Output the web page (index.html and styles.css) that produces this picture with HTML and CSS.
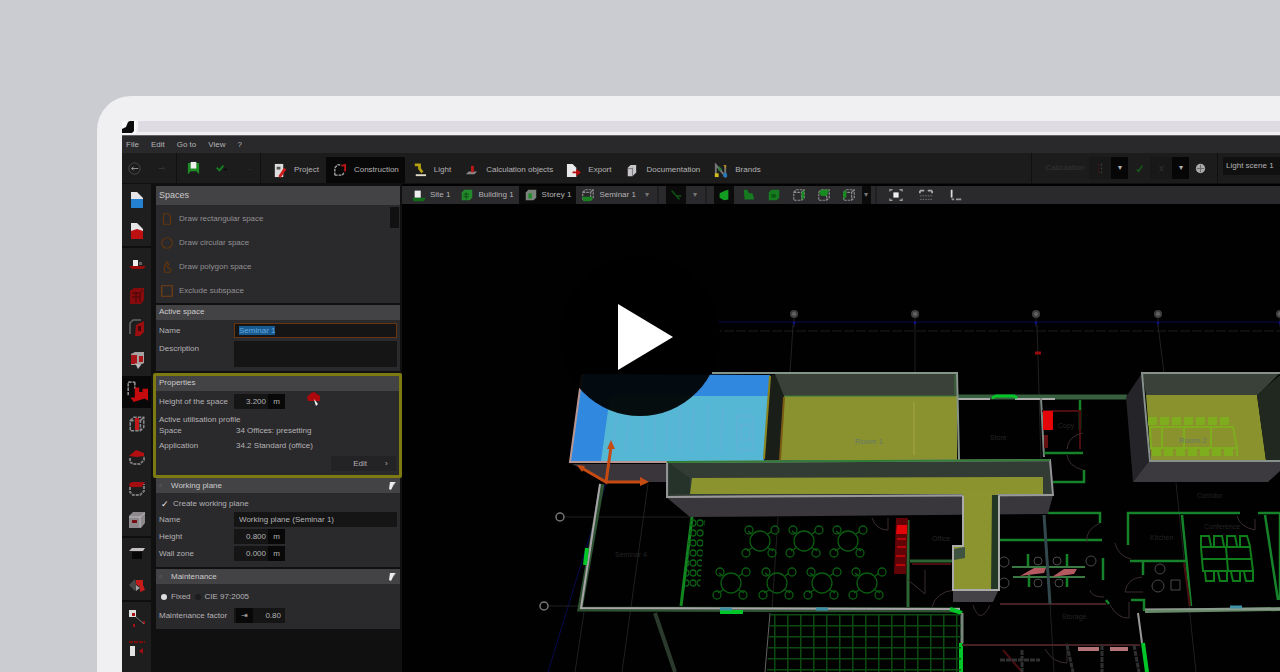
FILE: index.html
```html
<!DOCTYPE html>
<html lang="en">
<head>
<meta charset="utf-8">
<meta name="viewport" content="width=device-width, initial-scale=1">
<title>Construction</title>
<link rel="stylesheet" href="styles.css">
</head>
<body>
<svg class="defs" aria-hidden="true">
  <defs>
    <symbol id="cube" viewBox="0 0 16 16"><path d="M2 5L5 2H14V11L11 14H2ZM2 5H11V14M11 5L14 2" fill="none" stroke="#8b898b" stroke-width="1.4" stroke-dasharray="3 1"/></symbol>
    <symbol id="pin" viewBox="0 0 10 10"><path d="M3 1H9L6 5L4 9L2 8Z" fill="#ececec"/><path d="M6 5L9 1" stroke="#777"/></symbol>
  </defs>
</svg>

<main class="device">
  <div class="bezel">
    <svg class="corner" viewBox="0 0 16 13" aria-hidden="true"><path d="M0 0H14V13H0Z" fill="#f8f8fa"/><path d="M0 12V8L4 6L6 1L8 0H12V10L10 12Z" fill="#0b0b0c"/></svg>
    <div class="bezel-line"></div>
  </div>

  <div class="app">
    <nav class="menubar" aria-label="Menu">
      <button>File</button><button>Edit</button><button>Go to</button><button>View</button><button>?</button>
    </nav>

    <header class="toolbar">
      <div class="tools">
        <button aria-label="Back"><svg viewBox="0 0 16 16"><circle cx="8" cy="8" r="6" fill="none" stroke="#4b4b4d"/><path d="M12 8H5M7 6L5 8L7 10" fill="none" stroke="#9a9a9b"/></svg></button>
        <button aria-label="Forward"><svg viewBox="0 0 16 16"><path d="M5 8H11M9 6L11 8" fill="none" stroke="#343436"/></svg></button>
      </div>
      <div class="tools">
        <button aria-label="Save"><svg viewBox="0 0 16 16"><path d="M2 2H14V14L11 11H5L2 14Z" fill="#1d8a24"/><path d="M5 1H11V8H5Z" fill="#eee"/></svg></button>
        <button aria-label="Undo"><svg viewBox="0 0 16 16"><path d="M4 7L7 10L11 5" fill="none" stroke="#178020" stroke-width="2"/><path d="M12 9H15" stroke="#0c0c0c" stroke-width="2"/></svg></button>
        <button aria-label="Redo"><svg viewBox="0 0 16 16"><path d="M8 9H12" stroke="#2a2a2c"/></svg></button>
      </div>
      <nav class="tabs" aria-label="Mode">
        <button><svg viewBox="0 0 16 16"><path d="M3 1H12V15H3Z" fill="#ddd"/><path d="M5 4H9V7H5Z" fill="#555"/><path d="M8 15L14 6" stroke="#cf1b1b" stroke-width="3"/></svg>Project</button>
        <button class="active"><svg viewBox="0 0 16 16"><path d="M3 13V5L6 2H10M3 13H11L13 10" fill="none" stroke="#aaa" stroke-width="1.4" stroke-dasharray="3 1"/><path d="M10 3L14 2V9" fill="none" stroke="#bb1616" stroke-width="2"/></svg>Construction</button>
        <button><svg viewBox="0 0 16 16"><path d="M3 2H8V6L11 10" fill="none" stroke="#b5a011" stroke-width="3"/><path d="M4 13H15" stroke="#e5dccb" stroke-width="2"/></svg>Light</button>
        <button><svg viewBox="0 0 16 16"><path d="M2 12L5 9H14L11 12Z" fill="#8b898b"/><path d="M9 3V10" stroke="#bd1919" stroke-width="3"/></svg>Calculation objects</button>
        <button><svg viewBox="0 0 16 16"><path d="M1 1H7L11 5V15H1Z" fill="#e9e9eb"/><path d="M7 9H11V6L16 10L11 14V11H7Z" fill="#b90e0e"/></svg>Export</button>
        <button><svg viewBox="0 0 16 16"><path d="M4 5L7 2H13V10L9 14H4Z" fill="#c7c5c9"/><path d="M9 5V14M4 6H9" stroke="#777"/></svg>Documentation</button>
        <button><svg viewBox="0 0 16 16"><path d="M3 14V2L13 14V2" fill="none" stroke="#777" stroke-width="2"/><path d="M2 11H6V15H2Z" fill="#d0bd19"/><path d="M11 11H15V15H11Z" fill="#2277bd"/><path d="M6 3L10 7L6 9Z" fill="#2c7b34"/><path d="M11 2H14V7Z" fill="#aa8720"/></svg>Brands</button>
      </nav>
      <div class="calc">
        <button class="calc-label" disabled>Calculation</button>
        <button class="sunk" aria-label="Pause"><svg viewBox="0 0 16 16"><path d="M6 3V14" stroke="#551515" stroke-dasharray="2 2"/><path d="M9 3V14" stroke="#444" stroke-dasharray="2 2"/></svg></button>
        <button class="drop" aria-label="Calculation options">▾</button>
        <button aria-label="Accept"><svg viewBox="0 0 16 16"><path d="M5 9L7 11L11 5" fill="none" stroke="#155e1b" stroke-width="1.6"/></svg></button>
        <button class="sunk" aria-label="Discard"><svg viewBox="0 0 16 16"><path d="M6 5L10 11M10 5L6 11" stroke="#343436"/></svg></button>
        <button class="drop" aria-label="More">▾</button>
        <button aria-label="Language"><svg viewBox="0 0 16 16"><circle cx="8" cy="8" r="5" fill="#aaa"/><path d="M8 4V12M4 8H12" stroke="#666"/></svg></button>
      </div>
      <div class="scene-pick"><select aria-label="Light scene"><option>Light scene 1</option></select></div>
    </header>

    <div class="workspace">
      <nav class="rail" aria-label="Construction tools">
        <div class="rail-group">
          <button aria-label="Open plan"><svg viewBox="0 0 18 18"><path d="M3 1H9L15 7V9H3Z" fill="#e5e5e7"/><path d="M3 8H15V17H3Z" fill="#2480d0"/></svg></button>
          <button aria-label="Close plan"><svg viewBox="0 0 18 18"><path d="M3 1H9L15 7V9H3Z" fill="#e5e5e7"/><path d="M3 9L9 7L15 9V17H3Z" fill="#bd1010"/></svg></button>
        </div>
        <div class="rail-group tall">
          <button aria-label="Site"><svg viewBox="0 0 18 18"><path d="M1 11H18L15 14H4Z" fill="#970b0b"/><path d="M5 5H10V11H5Z" fill="#eee"/><path d="M11 7H14V10H11Z" fill="#626064"/></svg></button>
          <button aria-label="Building"><svg viewBox="0 0 18 18"><path d="M2 4L6 1H16V13L13 17H2Z" fill="#870b0d"/><path d="M4 6H12V15M4 10H12M8 5V16M12 6L15 3" stroke="#430607" fill="none"/></svg></button>
          <button aria-label="Storey"><svg viewBox="0 0 18 18"><path d="M2 15V4L5 1H13" fill="none" stroke="#666" stroke-width="1.5"/><path d="M8 6L16 2V13L12 17H7Z" fill="#9c0d0f"/><path d="M10 7H13V12H10Z" fill="#430607"/></svg></button>
          <button aria-label="Room"><svg viewBox="0 0 18 18"><path d="M3 3L7 1H16V12L12 14H3Z" fill="#a6a2a4"/><path d="M3 4H9V13H3ZM11 5H15V11H11Z" fill="#a9161a"/><path d="M7 12L13 14L10 18Z" fill="#bbb"/></svg></button>
          <button class="active" aria-label="Spaces"><svg viewBox="0 0 20 20"><path d="M2 13V1H8M8 1V7" fill="none" stroke="#8a898b" stroke-width="1.5" stroke-dasharray="3 1"/><path d="M8 6H12V10H15V7H20V18L17 16L7 19L4 15H8Z" fill="#c50b0e"/></svg></button>
          <button aria-label="Windows"><svg viewBox="0 0 18 18"><use href="#cube"/><path d="M7 3H11V15H7Z" fill="#c1181b"/></svg></button>
          <button aria-label="Roofs"><svg viewBox="0 0 18 18"><path d="M1 9L8 3L16 6V9L9 10Z" fill="#b50e11"/><path d="M2 11V15L5 17H12L16 13V9" fill="none" stroke="#777" stroke-width="2" stroke-dasharray="3 1"/></svg></button>
          <button aria-label="Ceilings"><svg viewBox="0 0 18 18"><path d="M1 5L4 3H17L14 8H2Z" fill="#a40d10"/><path d="M2 8V13L5 16H12L16 12V5" fill="none" stroke="#777" stroke-width="2" stroke-dasharray="3 1"/></svg></button>
          <button aria-label="Cutouts"><svg viewBox="0 0 18 18"><path d="M1 5L5 1H17V12L13 17H1Z" fill="#8d898d"/><path d="M1 6H12V16M12 6L17 2" stroke="#bbb" fill="none"/><path d="M4 9H9V12H4Z" fill="#760e12"/></svg></button>
        </div>
        <div class="rail-group">
          <button aria-label="Furniture"><svg viewBox="0 0 18 18"><path d="M1 6L4 3H17L15 6Z" fill="#c4bfc2"/><path d="M4 7H14V14H4Z" fill="#070707"/></svg></button>
          <button aria-label="Materials"><svg viewBox="0 0 18 18"><path d="M1 9L7 3L9 12L7 15Z" fill="#484649"/><path d="M8 4H15V9L17 14L12 16V11L8 8Z" fill="#c21c1b"/><path d="M8 9L12 12L8 15Z" fill="#a5a1a3"/></svg></button>
        </div>
        <div class="rail-group">
          <button aria-label="Copy along line"><svg viewBox="0 0 18 18"><path d="M1 1H8V8H1Z" fill="#ddd"/><path d="M4 4H7V7H4ZM5 15H7V18H5ZM15 12H17V15H15Z" fill="#a41215"/><path d="M8 8L16 15" stroke="#777"/></svg></button>
          <button aria-label="Replace"><svg viewBox="0 0 18 18"><path d="M1 2H17" stroke="#790b0e" stroke-width="2" stroke-dasharray="4 1"/><path d="M2 6H7V16H2Z" fill="#e2e2e2"/><path d="M11 11L15 8V14Z" fill="#a30e11"/></svg></button>
        </div>
      </nav>

      <aside class="panel">
        <section class="card">
          <h2 class="big">Spaces</h2>
          <div class="draw-list">
            <button><svg viewBox="0 0 16 16"><path d="M4 2H10L12 5V14H4Z" fill="none" stroke="#60340d" stroke-width="1.4"/></svg>Draw rectangular space</button>
            <button><svg viewBox="0 0 16 16"><circle cx="8" cy="8" r="6" fill="none" stroke="#60340d" stroke-width="1.4"/></svg>Draw circular space</button>
            <button><svg viewBox="0 0 16 16"><path d="M5 14V8L8 2L10 5L8 8L12 11V14Z" fill="none" stroke="#60340d" stroke-width="1.4"/></svg>Draw polygon space</button>
            <button><svg viewBox="0 0 16 16"><path d="M2 2H14V14H2Z" fill="none" stroke="#754010" stroke-width="1.4"/></svg>Exclude subspace</button>
            <span class="thumb"></span>
          </div>
        </section>

        <section class="card">
          <h2>Active space</h2>
          <div class="form active-space">
            <label for="space-name">Name</label><div class="named"><input id="space-name" value="Seminar 1"><mark>Seminar 1</mark></div>
            <label for="space-desc">Description</label><textarea id="space-desc"></textarea>
          </div>
        </section>

        <section class="card marked">
          <h2>Properties</h2>
          <div class="form">
            <label for="space-height">Height of the space</label>
            <div class="line"><span class="num"><input id="space-height" value="3.200"><span>m</span></span>
              <svg class="pointer" viewBox="0 0 16 18" aria-hidden="true"><path d="M1 7L5 3L8 2L14 6V11H2Z" fill="#ad090c"/><path d="M8 9L12 14L10 16L9 13Z" fill="#f3f3f3"/></svg></div>
          </div>
          <h3>Active utilisation profile</h3>
          <dl><dt>Space</dt><dd>34 Offices: presetting</dd><dt>Application</dt><dd>34.2 Standard (office)</dd></dl>
          <button class="edit">Edit<span>›</span></button>
        </section>

        <section class="card">
          <h2 class="fold"><span>▫</span>Working plane<svg viewBox="0 0 10 10"><use href="#pin"/></svg></h2>
          <div class="checks"><input type="checkbox" id="create-plane" checked><label for="create-plane">Create working plane</label></div>
          <div class="form plane">
            <label for="plane-name">Name</label><input id="plane-name" value="Working plane (Seminar 1)">
            <label for="plane-height">Height</label><span class="num"><input id="plane-height" value="0.800"><span>m</span></span>
            <label for="wall-zone">Wall zone</label><span class="num"><input id="wall-zone" value="0.000"><span>m</span></span>
          </div>
        </section>

        <section class="card">
          <h2 class="fold"><span>▫</span>Maintenance<svg viewBox="0 0 10 10"><use href="#pin"/></svg></h2>
          <div class="checks radios"><input type="radio" name="mf" id="fixed" checked><label for="fixed">Fixed</label><input type="radio" name="mf" id="cie"><label for="cie">CIE 97:2005</label></div>
          <div class="form factor">
            <label for="mf-value">Maintenance factor</label><span class="num lead"><span>⇥</span><input id="mf-value" value="0.80"></span>
          </div>
        </section>
      </aside>

      <section class="viewer">
        <div class="viewbar">
          <button><svg viewBox="0 0 16 16"><path d="M0 11H16L13 15H2Z" fill="#136c19"/><path d="M3 3H10V11H3Z" fill="#eee"/></svg>Site 1</button>
          <button><svg viewBox="0 0 16 16"><path d="M2 5L5 2H14V11L11 14H2Z" fill="#238a2b"/><path d="M4 7H10M4 10H10M7 5V13" stroke="#0c4811"/></svg>Building 1</button>
          <button class="active"><svg viewBox="0 0 16 16"><path d="M2 5L5 2H14V11L11 14H2Z" fill="#7c827c"/><path d="M5 6H9V12H5Z" fill="#228a2a"/></svg>Storey 1</button>
          <button><svg viewBox="0 0 16 16"><use href="#cube"/><path d="M1 10H14L11 15H3Z" fill="#188020"/></svg>Seminar 1</button>
          <button class="tiny" aria-label="Next space">▾</button>
          <i></i>
          <button class="active icon" aria-label="Filter"><svg viewBox="0 0 16 16"><path d="M3 3L12 13M8 9H14" stroke="#0d4b12" stroke-width="2"/></svg></button>
          <button class="tiny" aria-label="Filter options">▾</button>
          <i></i>
          <button class="active icon" aria-label="3D view"><svg viewBox="0 0 16 16"><path d="M3 6L9 3L13 2V13L8 14L3 11Z" fill="#129c22"/></svg></button>
          <button class="icon" aria-label="Plan view"><svg viewBox="0 0 16 16"><path d="M2 2H6L8 6H12L14 13H3Z" fill="#167b20"/></svg></button>
          <button class="icon" aria-label="Solid view"><svg viewBox="0 0 16 16"><path d="M2 5L5 2H14V11L11 14H2Z" fill="#177c20"/><path d="M5 7H10V11H5Z" fill="#0a5812"/></svg></button>
          <button class="icon" aria-label="Right view"><svg viewBox="0 0 16 16"><use href="#cube"/><path d="M11 5L14 2V11L11 14Z" fill="#178a20"/></svg></button>
          <button class="icon" aria-label="Top view"><svg viewBox="0 0 16 16"><use href="#cube"/><path d="M2 5L5 2H14L11 9H5Z" fill="#178a20"/></svg></button>
          <button class="icon" aria-label="Left view"><svg viewBox="0 0 16 16"><use href="#cube"/><path d="M1 5L5 2V10L2 13Z" fill="#178a20"/></svg></button>
          <button class="tiny active last" aria-label="More views">▾</button>
          <i></i>
          <button class="icon wide" aria-label="Zoom to fit"><svg viewBox="0 0 16 16"><path d="M5 5H11V11H5Z" fill="#eee"/><path d="M1 4V2H4M12 2H15V4M15 12V14H12M4 14H1V12" fill="none" stroke="#999" stroke-width="1.5"/></svg></button>
          <button class="icon wide" aria-label="Dimensions"><svg viewBox="0 0 16 16"><path d="M1 3H6M10 3H15M1 6V3M15 6V3" stroke="#aaa" stroke-width="2"/><path d="M1 9H15M1 13H15" stroke="#777" stroke-dasharray="2 1"/></svg></button>
          <button class="icon wide" aria-label="Coordinates"><svg viewBox="0 0 16 16"><path d="M3 2V11" stroke="#ddd" stroke-width="2"/><path d="M3 13H6M8 13H14" stroke="#999" stroke-width="2"/></svg></button>
        </div>

        <svg class="plan" viewBox="402 204 878 468" preserveAspectRatio="xMinYMin slice" role="img" aria-label="3D floor plan">
          <defs>
            <pattern id="tiles" x="774" y="614" width="13" height="11" patternUnits="userSpaceOnUse"><path d="M0 0H13M0 0V11" stroke="#0c4a12" stroke-width="3"/></pattern>
            <g id="seats" fill="none" stroke="#0b5c12" stroke-width="1.3">
              <circle r="10"/><path d="M-8-7L-12-10M8-7L12-10M-8 7L-13 10M8 7L13 10"/>
              <circle cx="-11" cy="-11" r="4"/><circle cx="15" cy="-11" r="4"/><circle cx="-14" cy="12" r="4"/><circle cx="12" cy="12" r="4"/>
            </g>
            <g id="axis"><circle r="4" fill="#3f3f40"/><circle r="2" fill="#626263"/><path d="M0 4V13" stroke="#222"/><circle cy="9" r="1.4" fill="#0f0f88"/></g>
            <pattern id="chairs" x="690" y="518" width="7" height="10" patternUnits="userSpaceOnUse"><circle cx="3" cy="5" r="3" fill="none" stroke="#0b6513" stroke-width="1.3"/></pattern>
          </defs>
          <g fill="none">
            <path d="M700 322H1280M606 483L548 672" stroke="#0a0a4f"/>
            <path d="M700 331H1280" stroke="#1c1c1c" stroke-dasharray="10 2"/>
            <path d="M793 325L790 373M915 325V373M1037 325L1041 460M1158 325L1164 373M648 484L622 672M584 612L575 672M565 517H690M549 606H580M778 517L772 610M1045 515L1054 672M1176 483L1196 672" stroke="#202021"/>
          </g>
          <use href="#axis" x="794" y="314"/><use href="#axis" x="915" y="314"/><use href="#axis" x="1036" y="314"/><use href="#axis" x="1158" y="314"/><use href="#axis" x="1280" y="314"/>
          <g fill="none" stroke="#777" stroke-width="1.5"><circle cx="560" cy="517" r="4"/><circle cx="544" cy="606" r="4"/></g>
          <path d="M1035 353H1041" stroke="#970b0b" stroke-width="3"/>

          <g class="walls" fill="none">
            <path d="M602 484L580 609L960 610" stroke="#2d5131" stroke-width="5"/>
            <path d="M600 484L581 608L960 609" stroke="#aaa4aa" stroke-width="2"/>
            <path d="M587 548L585 565M720 612H743M950 609L962 613M961 643V672" stroke="#00c629" stroke-width="4"/>
            <path d="M962 613V643" stroke="#77867a" stroke-width="3"/>
            <path d="M692 517L681 606" stroke="#128620" stroke-width="3"/>
            <path d="M655 613L675 672" stroke="#2b3a2c" stroke-width="4"/><path d="M770 613L765 672" stroke="#626362"/>
            <path d="M958 397H1127" stroke="#39603e" stroke-width="5"/><path d="M958 399H990M1015 399H1055" stroke="#aaa" stroke-width="2"/>
            <path d="M992 398L996 396H1014L1017 398" stroke="#00c629" stroke-width="3"/>
            <path d="M1041 398L1044 457" stroke="#7c8681" stroke-width="2"/>
            <path d="M1080 400V430M1044 453H1083M1084 470V482H1053M1048 513H1100V523M1000 540H1102M1128 545V513H1240M1258 513H1280V600M1130 561H1186M1182 515L1191 606M1265 515L1278 600M1143 561V575M1103 558V580M1028 554V567M1029 575V587M1067 554V567M1067 576V587M1106 600L1109 604M1131 600H1144V611" stroke="#16832a" stroke-width="2.5"/>
            <path d="M1012 567H1085M1013 577H1085" stroke="#387a41" stroke-width="2"/>
            <path d="M1145 611L1280 609" stroke="#688a6b" stroke-width="4"/><path d="M1145 609H1280" stroke="#aaa"/>
            <path d="M1138 613L1142 643" stroke="#999" stroke-width="2"/><path d="M1143 643L1147 672" stroke="#00c629" stroke-width="4"/>
            <path d="M908 520V607M910 561H954" stroke="#2c6531" stroke-width="3"/>
            <path d="M1000 604H1106M962 645H1140" stroke="#472023" stroke-width="2"/>
            <path d="M1184 563L1190 606M1042 411H1080V449M912 564H951M1003 650L1022 672" stroke="#4a0d10" stroke-width="2"/>
            <path d="M1044 515L1050 604" stroke="#32484c" stroke-width="3"/>
            <path d="M720 609H732M816 609H828M1230 607H1242" stroke="#3f91a7" stroke-width="3"/>
            <path d="M1083 433Q1068 436 1067 449M1067 455Q1068 466 1083 470M1100 523Q1085 530 1087 542M1115 543Q1118 556 1131 559M1142 577Q1127 578 1125 592H1143M1237 516Q1240 527 1255 530V519M1090 590Q1091 597 1104 597M1110 605Q1118 619 1129 618V602M908 580L925 594V570M954 590Q936 592 932 607M872 518Q876 530 888 530V518M973 605Q980 626 990 605M1045 649Q1053 663 1067 663V643" stroke="#392c2f"/>
          </g>
          <path d="M770 614H961V672H767Z" fill="url(#tiles)"/>
          <path d="M690 518H705L700 589H685Z" fill="url(#chairs)"/>
          <use href="#seats" x="760" y="541"/><use href="#seats" x="804" y="541"/><use href="#seats" x="848" y="541"/>
          <use href="#seats" x="731" y="583"/><use href="#seats" x="777" y="583"/><use href="#seats" x="822" y="583"/><use href="#seats" x="867" y="583"/>
          <path d="M896 518H908L906 574H894Z" fill="#610307"/><path d="M897 525H907V534H896ZM1043 411H1053V430H1043Z" fill="#e40508"/>
          <path d="M897 539H906M897 547H906M896 556H905M896 565H905" stroke="#b50508" stroke-width="2"/><path d="M1046 435V448" stroke="#641012" stroke-width="4"/>
          <g fill="none" stroke="#107d1b" stroke-width="2">
            <path d="M1201 547H1250L1253 571H1203ZM1202 559H1252M1226 547L1228 571"/>
            <path d="M1201 546V536H1209L1211 546M1214 546V536H1222L1224 546M1227 546V536H1235L1237 546M1240 546V536H1247L1250 546M1205 572L1206 581H1214V572M1218 572L1220 581H1227V572M1231 572L1233 581H1240V572M1244 572L1246 581H1253V572"/>
          </g>
          <path d="M1020 576L1034 568H1046L1044 573ZM1052 577L1064 569H1077L1074 574Z" fill="#b55960"/>
          <path d="M1078 649H1099M1110 649H1128" stroke="#b57578" stroke-width="4"/>
          <g fill="none" stroke="#4b484c"><circle cx="1160" cy="569" r="5"/><circle cx="1158" cy="586" r="6"/><path d="M1171 580H1180V590H1171Z"/><circle cx="1038" cy="561" r="4"/><circle cx="1057" cy="561" r="4"/><circle cx="1091" cy="561" r="5"/><circle cx="1004" cy="562" r="5"/><circle cx="1004" cy="583" r="5"/><circle cx="1038" cy="583" r="4"/><circle cx="1059" cy="583" r="4"/></g>
          <g fill="none" stroke="#303033" stroke-width="3"><path d="M1067 645L1073 672M1102 645V672M1134 645L1139 672M1000 660H1040M1022 650V672" stroke-dasharray="5 1"/></g>

          <g class="solid">
            <path d="M582 374L770 375L765 461H570Z" fill="#3189df"/>
            <path d="M610 396H768L763 461H601Z" fill="#56b7d4"/>
            <g fill="none" stroke="#65add9" stroke-width="1.5" opacity=".65"><path d="M618 405L612 452M630 405L625 452M642 407V450M655 405V452M668 407L666 452M680 405V452M694 407L691 452M708 405V450M723 407L720 452M737 416H753V450H737ZM741 425H750V440H741Z"/></g>
            <path d="M582 374L570 462H765" fill="none" stroke="#b89793" stroke-width="2"/>
            <path d="M770 375H778L784 396L781 461H764Z" fill="#191e18"/><path d="M770 376L764 459" stroke="#8c841c" stroke-width="2"/>
            <path d="M775 374H957V396H784Z" fill="#394139"/><path d="M784 396H957V460H780Z" fill="#89922e"/>
            <path d="M712 373H957L959 460" fill="none" stroke="#85958a" stroke-width="2"/><path d="M955 375V395M784 396H955" stroke="#38763c"/>
            <path d="M784 397L780 460" stroke="#7b5a14" stroke-width="2"/>
            <path d="M914 402V455" stroke="#979c39" stroke-width="2"/>
            <path d="M572 464H667V482H606Z" fill="#39353b"/>
            <path d="M667 462L1050 460L1053 495L667 497Z" fill="#333c34" stroke="#939398" stroke-width="2"/>
            <path d="M692 478L1043 477V494H690Z" fill="#8a932d"/><path d="M669 463L690 478V494H669Z" fill="#26332a"/>
            <path d="M667 462L1050 460" stroke="#317d36" stroke-width="2"/>
            <path d="M666 497L1053 495L1048 514L690 517Z" fill="#39373b"/><path d="M666 497L1053 495" stroke="#999" stroke-width="2"/>
            <path d="M963 491H997V589H952V547L963 545Z" fill="#8c942f"/><path d="M992 495H998V590H991Z" fill="#223824"/>
            <path d="M963 496V546H953V590H999V496" fill="none" stroke="#aaa" stroke-width="2"/><path d="M954 549L965 547V558L954 560Z" fill="#3f5440"/>
            <path d="M953 591H998L993 602H953Z" fill="#444246"/>
            <path d="M1142 373L1126 397L1133 482L1149 461Z" fill="#252428"/><path d="M1142 373H1280L1258 395H1146Z" fill="#394139"/>
            <path d="M1146 395H1257L1266 460H1151Z" fill="#8a922e"/><path d="M1257 395L1280 375V461H1266Z" fill="#20281f"/>
            <path d="M1149 461H1280V471L1268 482H1133Z" fill="#3d3a3f"/><path d="M1280 373H1142L1150 461H1280" fill="none" stroke="#87918c" stroke-width="2"/>
            <g fill="none" stroke="#7eae1d" stroke-width="2"><path d="M1150 427H1233L1237 448H1151ZM1162 428V448M1184 428V448M1211 428V448"/><path d="M1148 421H1232M1152 452H1238" stroke-width="8" stroke-dasharray="9 3"/></g>
          </g>
          <g class="room-names"><text x="855" y="444">Room 1</text><text x="1179" y="443">Room 2</text></g>
          <g class="faint-names"><text x="615" y="557">Seminar 4</text><text x="990" y="440">Store</text><text x="1058" y="428">Copy</text><text x="1150" y="540">Kitchen</text><text x="1197" y="498">Corridor</text><text x="1204" y="529">Conference</text><text x="1062" y="619">Storage</text><text x="932" y="541">Office</text></g>
          <g fill="none" stroke="#c64b13" stroke-width="3"><path d="M611 447L606 482L580 467M606 482H643"/></g>
          <path d="M607 449L611 440L615 449ZM577 465L585 466L582 472ZM640 477L649 482L640 486Z" fill="#c64b13"/>
        </svg>
      </section>
    </div>
  </div>
</main>

<button class="play" aria-label="Play video"><svg viewBox="0 0 160 160"><path d="M58 48V114L113 81Z" fill="#fff"/></svg></button>
</body>
</html>
```
FILE: styles.css
```css
* { box-sizing: border-box; }

body {
  margin: 0;
  min-height: 100vh;
  position: relative;
  display: flex;
  overflow-x: hidden;
  background: #cbccd1;
  color: #b4b3b5;
  font: 8px/12px "Liberation Sans", Arial, sans-serif;
}

button, input, select, textarea {
  margin: 0;
  padding: 0;
  border: 0;
  border-radius: 0;
  background: none;
  color: inherit;
  font: inherit;
}

svg { display: block; flex: none; }
.defs { position: absolute; width: 0; height: 0; }

/* Monitor frame */
.device {
  flex: 1;
  min-width: 0;
  display: flex;
  flex-direction: column;
  margin: 96px 0 0 97px;
  padding: 25px 0 0 25px;
  border-radius: 34px 0 0 0;
  background: #f0f0f3;
}
.bezel { display: flex; height: 14px; }
.corner { width: 16px; height: 13px; }
.bezel-line { flex: 1; margin-bottom: 3px; background: #dedbe3; }

.app {
  flex: 1;
  display: flex;
  flex-direction: column;
  border-top: 1px solid #626064;
  background: #101010;
}

.menubar {
  display: flex;
  gap: 12px;
  height: 17px;
  padding: 0 4px;
  background: #29282b;
}

/* Main toolbar */
.toolbar {
  display: flex;
  height: 31px;
  background: #1c1c1c;
  border-bottom: 1px solid #101010;
}
.toolbar button { display: flex; align-items: center; justify-content: center; }
.toolbar svg { width: 15px; height: 15px; }
.tools {
  display: flex;
  gap: 12px;
  padding: 0 7px 0 5px;
  border-right: 1px solid #101010;
}
.tools + .tools { padding: 0 5px 0 9px; }
.tabs { display: flex; gap: 1px; margin-left: 5px; padding-top: 4px; }
.tabs button { gap: 7px; padding: 0 6px; }
.tabs .active { background: #080808; }

.calc {
  display: flex;
  margin-left: auto;
  padding: 4px 6px 4px 9px;
  border-left: 1px solid #101010;
}
.calc button { width: 22px; }
.calc .calc-label { width: 48px; color: #353537; }
.calc .sunk { background: #181818; }
.calc .drop { width: 17px; background: #060606; }
.scene-pick { padding: 4px 0 6px 5px; border-left: 1px solid #101010; }
.scene-pick select {
  appearance: none;
  width: 57px;
  height: 18px;
  padding-left: 3px;
  background: #101010;
}

/* Workspace */
.workspace { flex: 1; display: flex; }
.rail { width: 29px; background: #1e1e1f; }
.rail-group + .rail-group { border-top: 2px solid #0e0e0e; }
.rail button {
  display: flex;
  align-items: center;
  justify-content: center;
  width: 100%;
  height: 31px;
}
.rail .tall button { height: 32px; }
.rail svg { width: 18px; height: 18px; }
.rail .active { background: #080808; }
.rail .active svg { width: 22px; height: 22px; }

.panel { width: 251px; padding: 2px 2px 0 5px; }
.card { margin-bottom: 2px; background: #2a292c; }
.card h2 {
  margin: 0;
  padding: 0 3px;
  height: 15px;
  background: #434245;
  font-size: 8px;
  line-height: 14px;
  font-weight: 400;
  color: #ccc;
}
.card h2.big { height: 19px; font-size: 9px; line-height: 18px; }
.card h2.fold { display: flex; gap: 4px; align-items: center; }
.fold span { width: 8px; color: #777; }
.fold svg { width: 10px; height: 10px; margin-left: auto; }

.draw-list { position: relative; padding: 2px 0 0; }
.draw-list button {
  display: flex;
  align-items: center;
  gap: 5px;
  width: 100%;
  height: 24px;
  padding-left: 4px;
  color: #929193;
}
.draw-list svg { width: 14px; height: 14px; }
.thumb {
  position: absolute;
  top: 2px;
  right: 1px;
  width: 9px;
  height: 21px;
  background: #111;
}

.form {
  display: grid;
  grid-template-columns: 75px 1fr;
  gap: 3px 0;
  padding: 3px 3px 5px;
}
.form label { line-height: 15px; }
.form input, .form textarea { min-width: 0; width: 100%; height: 15px; background: #151515; }
.form textarea { height: 26px; resize: none; }
.form > input { padding-left: 5px; }
.form.active-space { padding-bottom: 4px; }
.named { position: relative; height: 15px; }
.named input { display: block; padding-left: 4px; border: 1px solid #673510; color: #4c9ee0; }
.named mark {
  position: absolute;
  top: 3px;
  left: 5px;
  line-height: 9px;
  background: #195a91;
  color: #62a9df;
  pointer-events: none;
}
.line { display: flex; justify-content: space-between; height: 15px; padding-right: 74px; }
.pointer { width: 16px; height: 18px; margin-top: -4px; }
.num { display: flex; width: 51px; height: 15px; background: #151515; line-height: 15px; }
.num input { flex: 1; text-align: right; }
.num span { width: 17px; margin-left: 2px; background: #080808; text-align: center; }
.num.lead input { padding-right: 4px; }

.marked {
  margin: 0 -2px 0 -3px;
  border: 3px solid #7d7a12;
  border-radius: 2px;
  padding-bottom: 4px;
}
.marked h3 { margin: 0; padding: 0 3px; font-size: 8px; line-height: 10px; font-weight: 400; }
.marked .form { padding-bottom: 6px; }
.marked dl {
  display: grid;
  grid-template-columns: 77px 1fr;
  row-gap: 3px;
  margin: 0;
  padding: 0 3px;
}
.marked dt, .marked dd { margin: 0; }
.edit {
  display: flex;
  justify-content: center;
  gap: 18px;
  width: 65px;
  height: 15px;
  margin: 4px 3px 0 auto;
  padding-left: 14px;
  background: #232225;
  line-height: 15px;
}

.checks { display: flex; align-items: center; gap: 5px; height: 18px; padding: 4px 5px 0; }
.checks input { appearance: none; width: 7px; height: 7px; }
.checks input[type="checkbox"]::before { content: "✓"; display: block; font: 9px/7px "DejaVu Sans", sans-serif; color: #eee; }
.checks input[type="radio"] { width: 6px; height: 6px; border-radius: 50%; background: #1c1c1d; }
.checks input[type="radio"]:checked { background: #ddd; }
.radios { gap: 4px; height: 22px; }
.form.plane { row-gap: 2px; padding-top: 1px; padding-bottom: 6px; }
.form.factor { padding-top: 2px; padding-bottom: 6px; }

/* 3D view */
.viewer { flex: 1; min-width: 0; display: flex; flex-direction: column; background: #010101; }
.viewbar {
  display: flex;
  height: 18px;
  margin-top: 2px;
  padding: 0 5px;
  background: #2a292c;
}
.viewbar button { display: flex; align-items: center; justify-content: center; gap: 4px; padding: 0 5px; flex: none; }
.viewbar svg { width: 14px; height: 14px; }
.viewbar .active { background: #0b0b0b; }
.viewbar .icon { width: 25px; }
.viewbar .icon.active { width: 20px; margin: 0 3px; }
.viewbar .icon.wide { width: 30px; }
.viewbar .tiny { width: 12px; padding: 0; color: #777; }
.viewbar .tiny.last { width: 9px; }
.viewbar i { width: 2px; margin: 0 4px; background: #202022; }
.plan { flex: 1; width: 100%; min-height: 0; }
.room-names { fill: #66796a; font-size: 8px; }
.faint-names { fill: #232325; font-size: 7px; }

/* Play overlay */
.play {
  position: absolute;
  top: 50%;
  left: 50%;
  width: 160px;
  height: 160px;
  transform: translate(-50%, -50%);
  border-radius: 50%;
  background: rgba(0, 0, 0, 0.93);
}
```
